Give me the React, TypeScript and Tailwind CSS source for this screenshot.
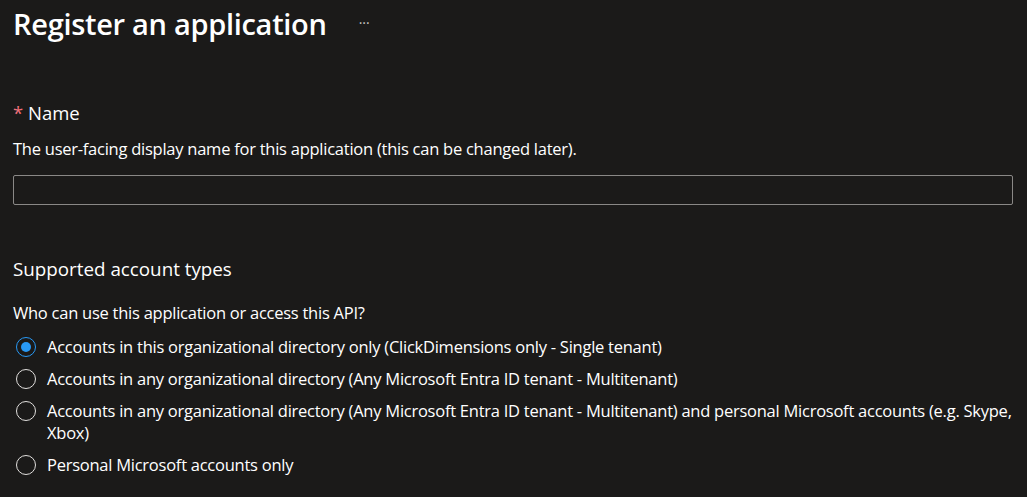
export default function App() {
  const opts = [
    "Accounts in this organizational directory only (ClickDimensions only - Single tenant)",
    "Accounts in any organizational directory (Any Microsoft Entra ID tenant - Multitenant)",
    "Accounts in any organizational directory (Any Microsoft Entra ID tenant - Multitenant) and personal Microsoft accounts (e.g. Skype, Xbox)",
    "Personal Microsoft accounts only",
  ];
  return (
    <div className="w-[1027px] h-[497px] overflow-hidden bg-[#1b1a19] text-white pl-[13px] pr-[14px]" style={{ fontFamily: '"Open Sans", "Noto Sans", sans-serif' }}>
      <div className="flex items-center h-[48px]">
        <h1 className="text-[29px] font-semibold tracking-[-0.3px]">Register an application</h1>
        <span className="ml-[32px] text-[14px] text-[#c8c6c4] mt-[-4px]">···</span>
      </div>
      <div className="mt-[52px] text-[18.5px] leading-[26px]"><span className="text-[#f1707b]">*</span> Name</div>
      <div className="mt-[12px] text-[16.5px] leading-[22px] tracking-[-0.25px]">The user-facing display name for this application (this can be changed later).</div>
      <div className="mt-[15px] h-[30px] border border-[#8a8886] rounded-[2px]" />
      <div className="mt-[51px] text-[18.8px] leading-[26px]">Supported account types</div>
      <div className="mt-[20px] text-[16.5px] leading-[22px] tracking-[-0.25px]">Who can use this application or access this API?</div>
      <div className="mt-[12px] flex flex-col gap-[10px]">
        {opts.map((o, i) => (
          <div key={i} className="flex items-start gap-[11px] pl-[3px]">
            <div className={`mt-[1px] shrink-0 w-[20px] h-[20px] rounded-full border-[1.5px] ${i === 0 ? "border-[#2899f5]" : "border-[#e1dfdd]"} flex items-center justify-center`}>
              {i === 0 && <div className="w-[10px] h-[10px] rounded-full bg-[#2899f5]" />}
            </div>
            <div className="text-[16.5px] leading-[22px] tracking-[-0.25px]">{o}</div>
          </div>
        ))}
      </div>
    </div>
  );
}
